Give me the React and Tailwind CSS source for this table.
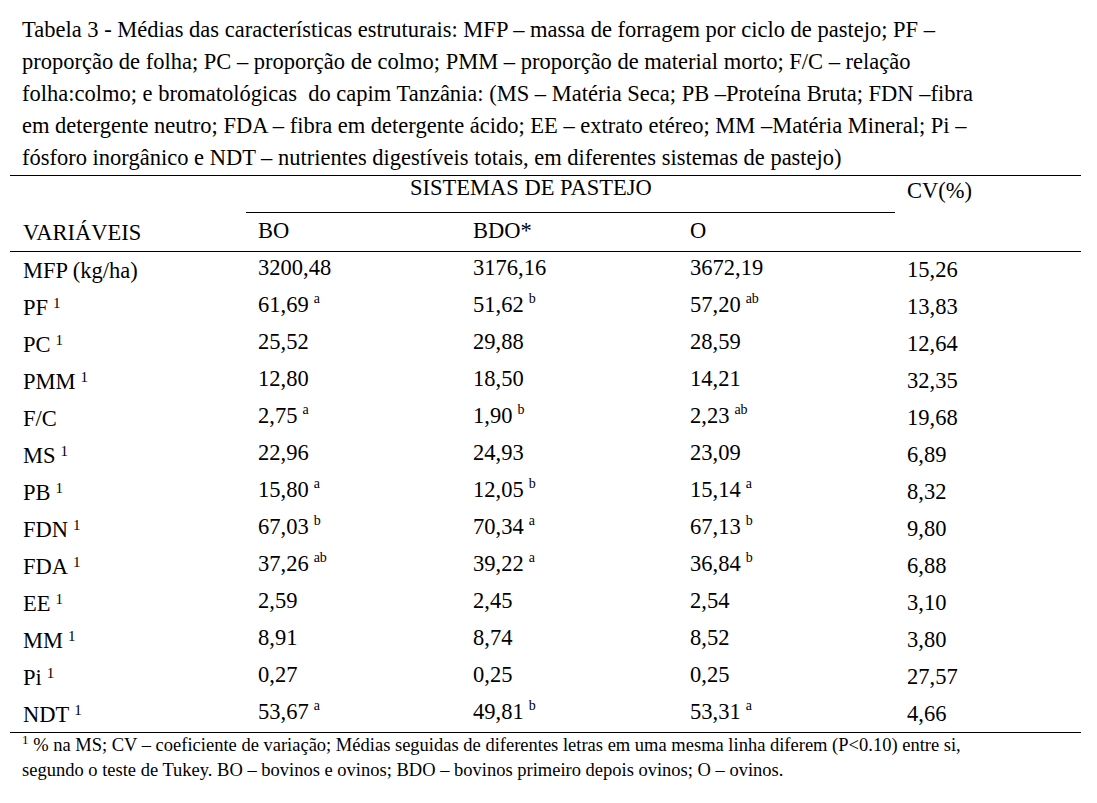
import React from "react";

const rows = [
  ["MFP (kg/ha)", false, ["3200,48", ""], ["3176,16", ""], ["3672,19", ""], "15,26"],
  ["PF", true, ["61,69", "a"], ["51,62", "b"], ["57,20", "ab"], "13,83"],
  ["PC", true, ["25,52", ""], ["29,88", ""], ["28,59", ""], "12,64"],
  ["PMM", true, ["12,80", ""], ["18,50", ""], ["14,21", ""], "32,35"],
  ["F/C", false, ["2,75", "a"], ["1,90", "b"], ["2,23", "ab"], "19,68"],
  ["MS", true, ["22,96", ""], ["24,93", ""], ["23,09", ""], "6,89"],
  ["PB", true, ["15,80", "a"], ["12,05", "b"], ["15,14", "a"], "8,32"],
  ["FDN", true, ["67,03", "b"], ["70,34", "a"], ["67,13", "b"], "9,80"],
  ["FDA", true, ["37,26", "ab"], ["39,22", "a"], ["36,84", "b"], "6,88"],
  ["EE", true, ["2,59", ""], ["2,45", ""], ["2,54", ""], "3,10"],
  ["MM", true, ["8,91", ""], ["8,74", ""], ["8,52", ""], "3,80"],
  ["Pi", true, ["0,27", ""], ["0,25", ""], ["0,25", ""], "27,57"],
  ["NDT", true, ["53,67", "a"], ["49,81", "b"], ["53,31", "a"], "4,66"],
];

const cols = "grid grid-cols-[236px_214px_218px_217px_186px]";

function Val({ v }) {
  return (
    <>
      {v[0]}
      {v[1] && <sup className="ml-[5px] text-[14px] top-[-0.62em]">{v[1]}</sup>}
    </>
  );
}

export default function App() {
  return (
    <div className="font-serif w-[1097px] h-[803px] bg-white text-black overflow-hidden">
      <div className="h-[175px] pl-[22px] pt-[14px] text-[22.5px] leading-[32px] whitespace-pre">
        <div className="[font-family:Liberation_Serif]">Tabela 3 - Médias das características estruturais: MFP – massa de forragem por ciclo de pastejo; PF –</div>
        <div className="[font-family:Liberation_Serif]">proporção de folha; PC – proporção de colmo; PMM – proporção de material morto; F/C – relação</div>
        <div className="[font-family:Liberation_Serif]">folha:colmo; e bromatológicas  do capim Tanzânia: (MS – Matéria Seca; PB –Proteína Bruta; FDN –fibra</div>
        <div className="[font-family:Liberation_Serif]">em detergente neutro; FDA – fibra em detergente ácido; EE – extrato etéreo; MM –Matéria Mineral; Pi –</div>
        <div className="[font-family:Liberation_Serif]">fósforo inorgânico e NDT – nutrientes digestíveis totais, em diferentes sistemas de pastejo)</div>
      </div>

      <div className="ml-[10px] w-[1071px] text-[22.5px] leading-[24px]">
        <div className={`${cols} grid-rows-[37px_38px] border-t border-b border-black`}>
          <div className="[font-family:Liberation_Serif] row-span-2 pl-[13px] pt-[45px]">VARIÁVEIS</div>
          <div className="[font-family:Liberation_Serif] col-span-3 border-b border-black pl-[164px]">SISTEMAS DE PASTEJO</div>
          <div className="[font-family:Liberation_Serif] row-span-2 pl-[12px] pt-[3px]">CV(%)</div>
          <div className="[font-family:Liberation_Serif] pl-[12px] pt-[6px]">BO</div>
          <div className="[font-family:Liberation_Serif] pl-[13px] pt-[6px]">BDO*</div>
          <div className="[font-family:Liberation_Serif] pl-[12px] pt-[6px]">O</div>
        </div>

        <div className="border-b border-black">
          {rows.map((r, i) => (
            <div key={i} className={`${cols} ${i === rows.length - 1 ? "h-[36px]" : "h-[37px]"}`}>
              <div className="[font-family:Liberation_Serif] pl-[13px] pt-[7px]">
                {r[0]}
                {r[1] && <sup className="ml-[5px] text-[15px] top-[-0.5em]">1</sup>}
              </div>
              <div className="[font-family:Liberation_Serif] pl-[12px] pt-[4px]"><Val v={r[2]} /></div>
              <div className="[font-family:Liberation_Serif] pl-[13px] pt-[4px]"><Val v={r[3]} /></div>
              <div className="[font-family:Liberation_Serif] pl-[12px] pt-[4px]"><Val v={r[4]} /></div>
              <div className="[font-family:Liberation_Serif] pl-[12px] pt-[6px]">{r[5]}</div>
            </div>
          ))}
        </div>
      </div>

      <div className="pl-[22px] text-[18.5px] leading-[25px] whitespace-pre">
        <div className="[font-family:Liberation_Serif]">
          <sup className="text-[13px] top-[-0.55em]">1</sup> % na MS; CV – coeficiente de variação; Médias seguidas de diferentes letras em uma mesma linha diferem (P&lt;0.10) entre si,
        </div>
        <div className="[font-family:Liberation_Serif]">segundo o teste de Tukey. BO – bovinos e ovinos; BDO – bovinos primeiro depois ovinos; O – ovinos.</div>
      </div>
    </div>
  );
}
